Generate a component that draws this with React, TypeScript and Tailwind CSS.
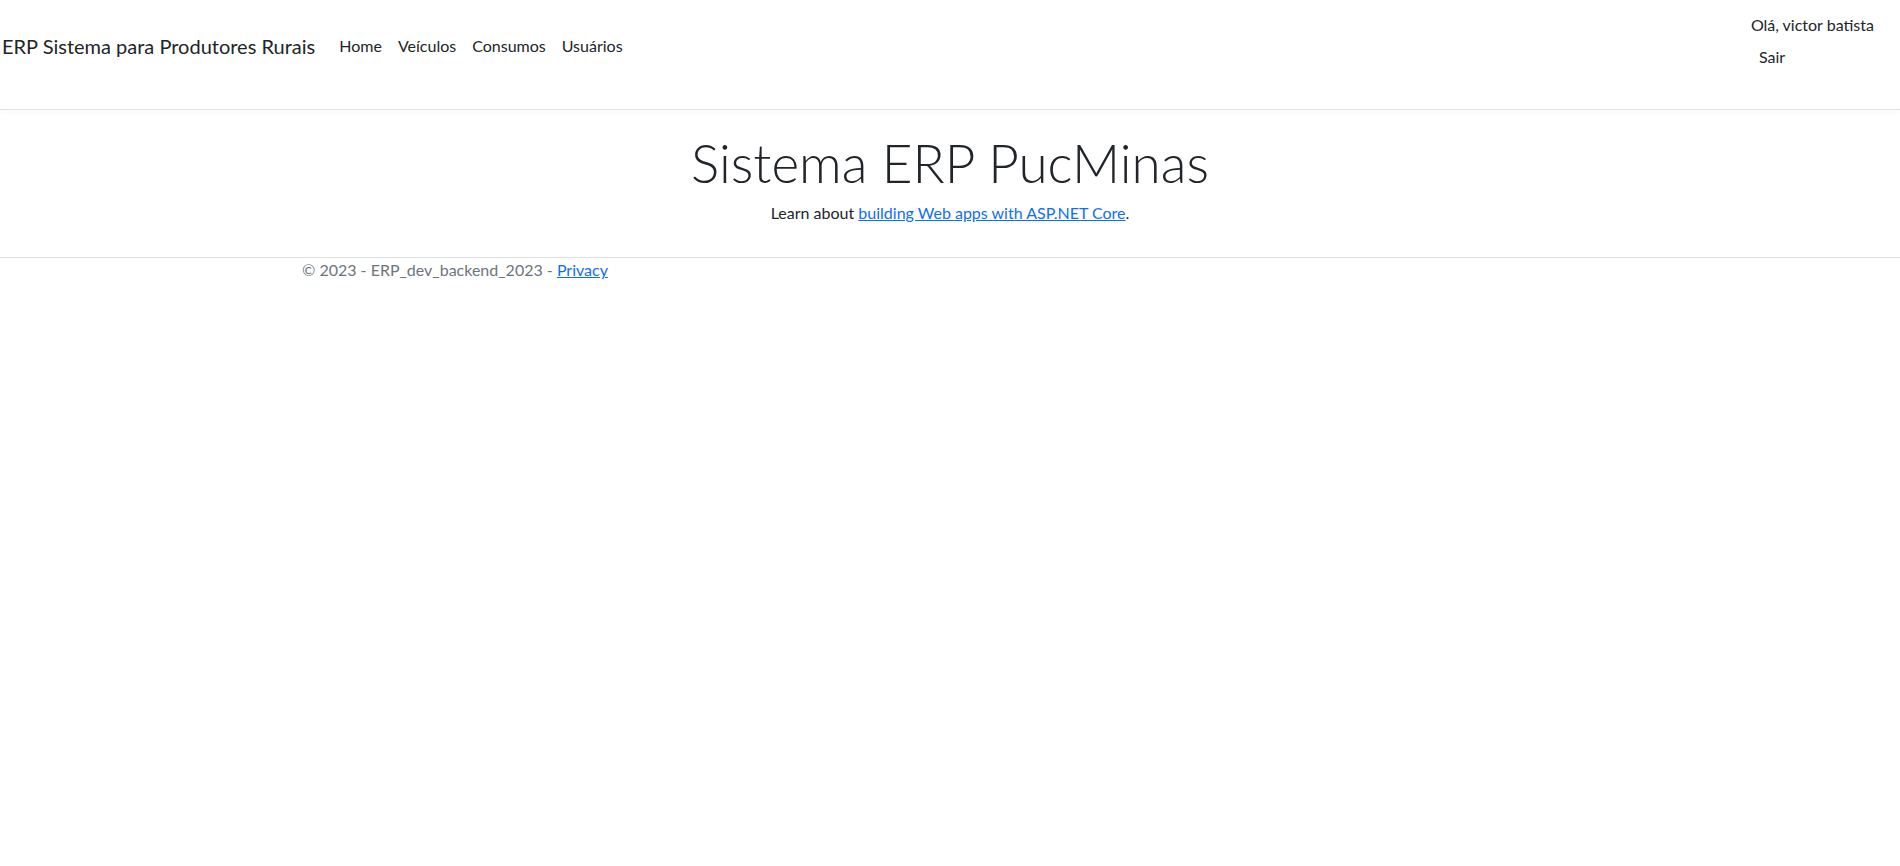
export default function App() {
  return (
    <div className="min-h-screen bg-white font-['Lato','Liberation_Sans',sans-serif] text-[#212529]">
      {/* Navbar */}
      <header className="border-b border-[#dee2e6] shadow-[0_2px_6px_rgba(0,0,0,0.03)]">
        <nav className="flex h-[109px] items-start pl-[2px] pr-[26px]">
          <a className="mt-[31px] mr-4 text-[20px] leading-[30px]">ERP Sistema para Produtores Rurais</a>
          <ul className="mt-[34px] flex text-[16px] leading-6">
            <li><a className="px-2">Home</a></li>
            <li><a className="px-2">Veículos</a></li>
            <li><a className="px-2">Consumos</a></li>
            <li><a className="px-2">Usuários</a></li>
          </ul>
          <ul className="mt-[13px] ml-auto flex flex-col gap-2 text-[16px] leading-6">
            <li>Olá, victor batista</li>
            <li className="pl-2">Sair</li>
          </ul>
        </nav>
      </header>

      {/* Main content */}
      <main className="mx-auto mt-4 max-w-[1320px] px-3 pb-4">
        <div className="text-center">
          <h1 className="mb-[5px] pt-[3px] text-[53px] font-light leading-[67px]">Sistema ERP PucMinas</h1>
          <p className="mb-4 text-[16px] leading-6">
            Learn about{" "}
            <a className="text-[#0d6efd] underline">building Web apps with ASP.NET Core</a>.
          </p>
        </div>
      </main>

      {/* Footer */}
      <footer className="border-t border-[#dee2e6] text-[16px] leading-6 text-[#6c757d]">
        <div className="mx-auto max-w-[1320px] px-3">
          © 2023 - ERP_dev_backend_2023 - <a className="text-[#0d6efd] underline">Privacy</a>
        </div>
      </footer>
    </div>
  );
}
